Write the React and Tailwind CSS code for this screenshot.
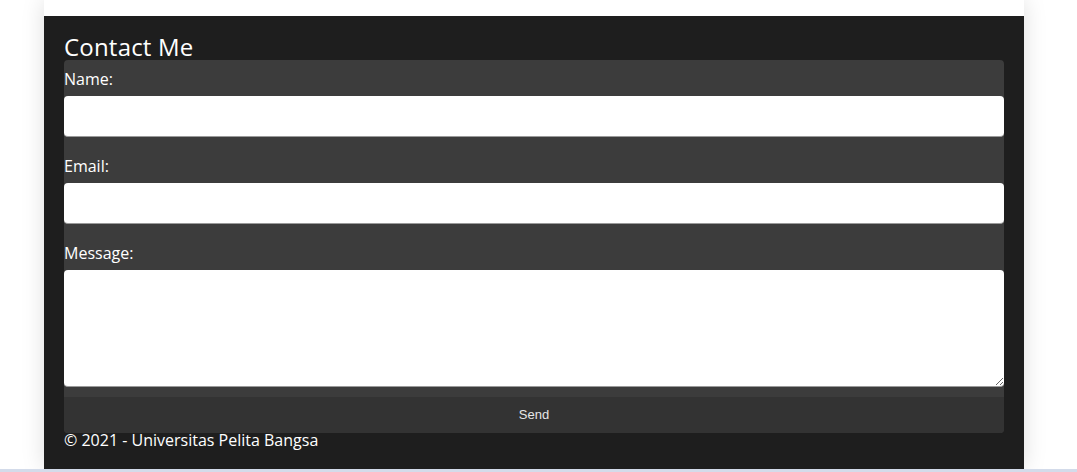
const Field = ({ label, children }) => (
  <div className="flex flex-col">
    <label className="mb-[5px] block text-[16px] leading-[24px] text-white">{label}</label>
    {children}
  </div>
)

const inputCls =
  'block h-[41px] w-full rounded-[4px] border-b border-[#9a9a9a] bg-white px-2 text-[16px] text-black outline-none'

export default function App() {
  return (
    <div className="flex h-[472px] flex-col overflow-hidden bg-white font-['Open_Sans',sans-serif]">
      <div className="ml-[44px] flex w-[980px] flex-1 flex-col bg-white pt-[16px] shadow-[0_0_22px_rgba(0,0,0,0.13)]">
        <div className="flex flex-1 flex-col bg-[#1e1e1e] px-[20px]">
          <h2 className="mt-[18px] text-[24px] leading-[26px] tracking-[0.2px] text-white">Contact Me</h2>
          <form className="flex flex-col rounded-[4px] bg-[#3c3c3c] pt-[7px]" onSubmit={(e) => e.preventDefault()}>
            <Field label="Name:">
              <input type="text" className={inputCls} />
            </Field>
            <div className="mt-[17px]">
              <Field label="Email:">
                <input type="email" className={inputCls} />
              </Field>
            </div>
            <div className="mt-[17px]">
              <Field label="Message:">
                <textarea className="block h-[117px] w-full rounded-[4px] border-b border-[#9a9a9a] bg-white px-2 text-[16px] text-black outline-none" />
              </Field>
            </div>
            <button
              type="submit"
              className="mt-[10px] h-[36px] w-full rounded-b-[4px] bg-[#333333] font-['Liberation_Sans',Arial,sans-serif] text-[13px] text-[#e6e6e6]"
            >
              Send
            </button>
          </form>
          <p className="-mt-[4px] text-[16px] leading-[22px] text-white">© 2021 - Universitas Pelita Bangsa</p>
        </div>
      </div>
      <div className="h-[3px] shrink-0 bg-[#d3dbea]" />
    </div>
  )
}
